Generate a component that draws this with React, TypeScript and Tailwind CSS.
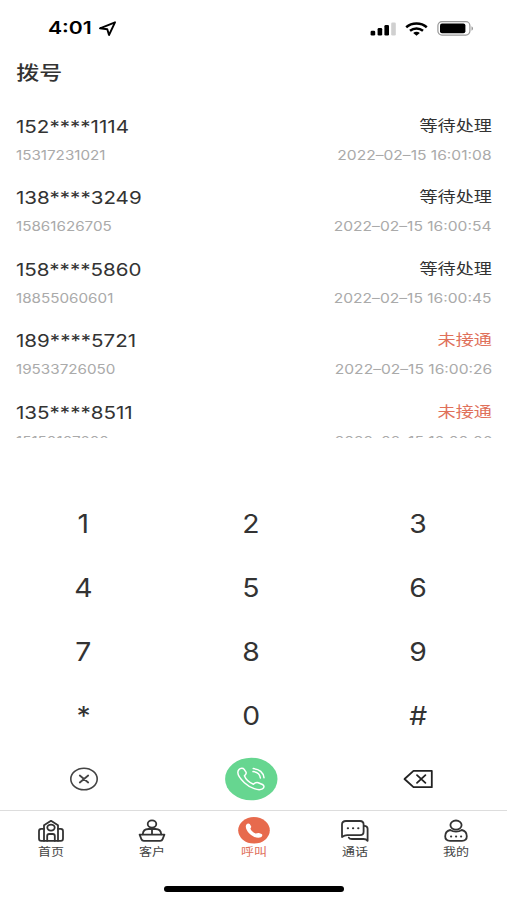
import type { ReactNode } from 'react';

const calls = [
  { number: '152****1114', line: '15317231021', status: '等待处理', time: '2022–02–15 16:01:08', missed: false },
  { number: '138****3249', line: '15861626705', status: '等待处理', time: '2022–02–15 16:00:54', missed: false },
  { number: '158****5860', line: '18855060601', status: '等待处理', time: '2022–02–15 16:00:45', missed: false },
  { number: '189****5721', line: '19533726050', status: '未接通', time: '2022–02–15 16:00:26', missed: true },
  { number: '135****8511', line: '15150107600', status: '未接通', time: '2022–02–15 16:00:06', missed: true },
];

const keys = ['1', '2', '3', '4', '5', '6', '7', '8', '9', '*', '0', '#'];

function StatusBar() {
  return (
    <div className="flex h-[57px] shrink-0 items-center justify-between pr-[33px] pl-[48px]">
      <div className="flex items-center">
        <span className="w-[44px] origin-left scale-x-[1.21] text-[17.5px] font-semibold text-black">4:01</span>
        <svg className="ml-[7px]" width="18" height="16" viewBox="0 0 18 16" fill="none">
          <path d="M1 7.3 16 1.3 10 14 8.3 8.2Z" stroke="#000" strokeWidth="1.9" strokeLinejoin="round" />
        </svg>
      </div>
      <div className="flex items-center">
        <svg width="26" height="14" viewBox="0 0 26 14">
          <rect x="0.6" y="8.7" width="4.6" height="4.8" rx="1.3" />
          <rect x="7.6" y="6" width="4.6" height="7.5" rx="1.3" />
          <rect x="14.4" y="3" width="4.6" height="10.5" rx="1.3" />
          <rect x="21.2" y="0.5" width="4.6" height="13" rx="1.3" fill="#d0d0d0" />
        </svg>
        <svg className="ml-[9px]" width="23" height="14" viewBox="0 0 23 14" fill="none" stroke="#000" strokeWidth="2.5">
          <path d="M1.2 5.2C7 .2 16 .2 21.8 5.2" />
          <path d="M5 8.7C8.8 5.6 14.2 5.6 18 8.7" />
          <path d="M8.2 11C10 9.4 13 9.4 14.8 11L11.5 13.8Z" fill="#000" stroke="none" />
        </svg>
        <svg className="ml-[9px]" width="37" height="15" viewBox="0 0 37 15">
          <rect x="0.9" y="0.7" width="32" height="13.4" rx="4" fill="none" stroke="#999" strokeWidth="1.2" />
          <rect x="3" y="2.6" width="25.4" height="9.6" rx="2" />
          <path d="M34.5 5.2C36.5 6 36.5 8.9 34.5 9.7Z" fill="#999" />
        </svg>
      </div>
    </div>
  );
}

function TabIcon({ children }: { children: ReactNode }) {
  return (
    <svg width="30" height="26" viewBox="0 0 30 26" fill="none" stroke="#333" strokeWidth="1.8" strokeLinejoin="round" strokeLinecap="round">
      {children}
    </svg>
  );
}

const tabs = [
  {
    label: '首页',
    icon: (
      <TabIcon>
        <path d="M8 22.8V7.2L15 2.8 22 7.2V22.8Z" />
        <path d="M8 10.8H5.2Q3 10.8 3 13.2V20.4Q3 22.8 5.2 22.8H8M22 10.8H24.8Q27 10.8 27 13.2V20.4Q27 22.8 24.8 22.8H22" />
        <ellipse cx="15" cy="9.6" rx="3.7" ry="3" />
        <path d="M11.2 22.8V18Q11.2 16 13.2 16H16.8Q18.8 16 18.8 18V22.8" />
      </TabIcon>
    ),
  },
  {
    label: '客户',
    icon: (
      <TabIcon>
        <ellipse cx="15" cy="6" rx="4.3" ry="3.6" />
        <path d="M5.8 16.3C6 12.8 8 11 11.5 11H18.5C22 11 24 12.8 24.2 16.3M15 11.2V16" />
        <path d="M2.6 16.6H27.4L25.5 21.4Q25 22.8 23.2 22.8H6.8Q5 22.8 4.5 21.4Z" />
      </TabIcon>
    ),
  },
  {
    label: '呼叫',
    active: true,
    icon: (
      <svg width="32" height="27" viewBox="0 0 32 27">
        <ellipse cx="16" cy="13.3" rx="15.8" ry="13.2" fill="#e76a4d" />
        <path
          d="M8.4 7.4C9.5 6.3 11.1 6.3 11.9 7.3L13.1 9.2C13.6 10.2 12.6 10.9 12.4 11.7C13.2 13.6 15.2 15.6 17.8 16.6C18.8 16.5 19.7 15.7 20.9 16L23.6 17.1C24.7 17.7 24.5 19 23.4 19.9C20.4 21.8 15.2 20.2 11.6 16.7C8.2 13.5 6.9 9.5 8.4 7.4Z"
          fill="#fff"
        />
      </svg>
    ),
  },
  {
    label: '通话',
    icon: (
      <TabIcon>
        <path d="M2 19V6.6Q2 3 6 3H20Q23.6 3 23.6 6.6V13.8Q23.6 17.2 20 17.2H7.2Q4.5 17.2 2 19Z" />
        <path d="M24 7.8Q27.6 7.8 27.6 10.8V22.8Q26 21 23.5 21H12Q9.5 21 8.8 19.6" />
        <path d="M7.8 10.2H8M13 10.2H13.2M18.2 10.2H18.4" strokeWidth="2.1" />
      </TabIcon>
    ),
  },
  {
    label: '我的',
    icon: (
      <TabIcon>
        <ellipse cx="15" cy="7.1" rx="5.6" ry="4.6" />
        <path d="M9.2 12C5.8 12.7 4.2 15.2 4.2 18.3C4.2 21.4 6 22.8 9 22.8H21C24 22.8 25.8 21.4 25.8 18.3C25.8 15.2 24.2 12.7 20.8 12C17.5 14.2 12.5 14.2 9.2 12Z" />
        <path d="M10 18.5H10.2M15 18.5H15.2M20 18.5H20.2" strokeWidth="2" />
      </TabIcon>
    ),
  },
];

export default function App() {
  return (
    <div className="flex h-[900px] w-[507px] flex-col overflow-hidden bg-white font-['Inter','Noto_Sans_CJK_SC',sans-serif] text-[#333]">
      <StatusBar />

      <h1 className="h-[46px] w-fit shrink-0 origin-left scale-x-[1.21] pl-[13.5px] text-[19px] leading-[33px] font-medium">拨号</h1>

      {/* Call history */}
      <div className="h-[335px] shrink-0 overflow-hidden pt-[11px] pr-[15px] pl-4">
        {calls.map((call) => (
          <div key={call.number} className="flex h-[71.4px] justify-between">
            <div className="flex flex-col items-start">
              <span className="origin-left scale-x-[1.175] text-[17.5px] leading-[26px]">{call.number}</span>
              <span className="mt-[3px] origin-left scale-x-[1.17] text-[13px] leading-[24px] text-[#aaa]">{call.line}</span>
            </div>
            <div className="flex flex-col items-end">
              <span className={`origin-right scale-x-[1.21] text-[15px] leading-[24px] ${call.missed ? 'text-[#e0705a]' : ''}`}>
                {call.status}
              </span>
              <span className="mt-[5px] origin-right scale-x-[1.2] text-[13px] leading-[24px] text-[#aaa]">{call.time}</span>
            </div>
          </div>
        ))}
      </div>

      {/* Keypad */}
      <div className="mt-[53px] grid w-[502px] shrink-0 grid-cols-3">
        {keys.map((key) => (
          <button key={key} className="flex h-16 items-center justify-center text-[26px]">
            <span className="scale-x-[1.09]">{key}</span>
          </button>
        ))}
        <button className="flex h-[63px] items-center justify-center">
          <svg width="30" height="24" viewBox="0 0 30 24" fill="none" stroke="#444" strokeWidth="1.6" strokeLinecap="round">
            <ellipse cx="15" cy="12" rx="13.2" ry="10.8" />
            <path d="M10.8 8.5 19.2 15.5M19.2 8.5 10.8 15.5" strokeWidth="1.8" />
          </svg>
        </button>
        <button className="flex h-[63px] items-center justify-center">
          <svg width="54" height="44" viewBox="0 0 54 44" fill="none" stroke="#fff" strokeWidth="1.5" strokeLinecap="round" strokeLinejoin="round">
            <ellipse cx="27.3" cy="22" rx="26.2" ry="21.3" fill="#66d690" stroke="none" />
            <path d="M15 12.6C16.4 11 19 10.8 20.2 12.4L22 15.2C22.8 16.7 21.8 17.7 20.4 18.8C21.6 22 25.4 25.6 29.4 27.2C31 25.8 32.6 25.2 34.2 25.7L38.5 27.5C40.5 28.6 40.4 30.7 38.4 31.9C34.6 34 26.4 31.2 20.4 25.7C15.2 20.8 12.4 15.5 15 12.6Z" />
            <path d="M29.2 11.6C35.2 11.8 39.6 15.8 40 20.8M29 14.6C33 15 36 17.6 36.4 21" />
          </svg>
        </button>
        <button className="flex h-[63px] items-center justify-center">
          <svg width="30" height="20" viewBox="0 0 30 20" fill="none" stroke="#222" strokeWidth="1.8" strokeLinecap="round" strokeLinejoin="round">
            <path d="M10.5 1.8H28.8V18.2H10.5L1.5 10Z" />
            <path d="M14 6.2 22.4 13.8M22.4 6.2 14 13.8" />
          </svg>
        </button>
      </div>

      {/* Tab bar */}
      <nav className="mt-auto flex h-[90px] shrink-0 flex-col border-t border-[#ddd]">
        <div className="flex">
          {tabs.map((tab) => (
            <a key={tab.label} className="flex flex-1 flex-col items-center pt-[6px]">
              <span className="flex h-[27px] items-center">{tab.icon}</span>
              <span className={`scale-x-[1.18] text-[11px] leading-[16px] ${tab.active ? 'text-[#e0705a]' : 'text-[#444]'}`}>{tab.label}</span>
            </a>
          ))}
        </div>
        <div className="mx-auto mt-[26px] h-[6px] w-[180px] rounded-full bg-black" />
      </nav>
    </div>
  );
}
